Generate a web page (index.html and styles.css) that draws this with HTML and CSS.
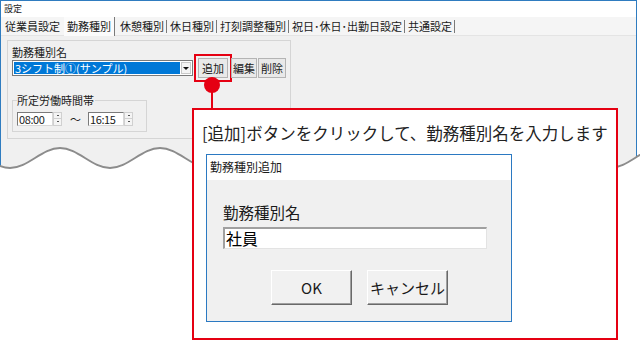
FILE: index.html
```html
<!DOCTYPE html>
<html lang="ja">
<head>
  <meta charset="UTF-8">
  <title>設定</title>
  <link rel="stylesheet" href="styles.css">
</head>
<body>
  <div class="window">
    <div class="titlebar">設定</div>
    <div class="tabs">
      <span class="tab first">従業員設定</span>
      <span class="tab active">勤務種別</span>
      <span class="tab">休憩種別</span>
      <span class="tab">休日種別</span>
      <span class="tab">打刻調整種別</span>
      <span class="tab">祝日･休日･出勤日設定</span>
      <span class="tab">共通設定</span>
    </div>
    <div class="page">
      <div class="group">
        <div class="field-label">勤務種別名</div>
        <div class="name-row">
          <div class="combo">
            <div class="combo-value">3シフト制①(サンプル)</div>
            <div class="combo-arrow"><i></i></div>
          </div>
          <button class="btn btn-add">追加</button>
          <button class="btn btn-edit">編集</button>
          <button class="btn btn-del">削除</button>
        </div>
        <fieldset class="hours">
          <legend>所定労働時間帯</legend>
          <div class="time-row">
            <div class="time-input">08:00</div>
            <div class="spin"><span><i class="up"></i></span><span><i class="down"></i></span></div>
            <span class="tilde">～</span>
            <div class="time-input">16:15</div>
            <div class="spin"><span><i class="up"></i></span><span><i class="down"></i></span></div>
          </div>
        </fieldset>
      </div>
    </div>
  </div>

  <!-- torn edge of the window -->
  <svg class="wave" width="640" height="190" viewBox="0 0 640 190">
    <path d="M-40 148 C-22 148 -8 168 10 168 S42 148 60 148 S92 168 110 168 S142 148 160 148 S192 168 210 168 S242 148 260 148 S292 168 310 168 S342 148 360 148 S392 168 410 168 S442 148 460 148 S492 168 510 168 S542 148 560 148 S592 168 610 168 S642 148 660 148 L660 190 L-40 190 Z" fill="#fff"/>
    <path d="M-40 148 C-22 148 -8 168 10 168 S42 148 60 148 S92 168 110 168 S142 148 160 148 S192 168 210 168 S242 148 260 148 S292 168 310 168 S342 148 360 148 S392 168 410 168 S442 148 460 148 S492 168 510 168 S542 148 560 148 S592 168 610 168 S642 148 660 148" fill="none" stroke="#8c8c8c" stroke-width="2"/>
  </svg>

  <div class="pin-line"></div>
  <div class="pin-dot"></div>

  <div class="callout">
    <div class="callout-text">[追加]ボタンをクリックして、勤務種別名を入力します</div>
    <div class="dialog">
      <div class="dialog-title">勤務種別追加</div>
      <div class="dialog-body">
        <div class="dialog-label">勤務種別名</div>
        <div class="dialog-input">社員</div>
        <div class="dialog-buttons">
          <button class="dlg-btn">OK</button>
          <button class="dlg-btn">キャンセル</button>
        </div>
      </div>
    </div>
  </div>
</body>
</html>
```

FILE: styles.css
```css
* {
  box-sizing: border-box;
}
body {
  margin: 0;
  width: 640px;
  height: 345px;
  position: relative;
  overflow: hidden;
  background: #fff;
  font-family: "Noto Sans CJK JP", sans-serif;
  color: #1a1a1a;
}
button {
  font-family: inherit;
  color: inherit;
  padding: 0;
  cursor: pointer;
}

/* window */
.window {
  width: 637px;
  height: 181px;
  border: 1px solid #2f7cc0;
  border-bottom: none;
  background: #f0f0f0;
}
.titlebar {
  height: 16px;
  background: #fff;
  font-size: 9px;
  line-height: 16px;
  padding-left: 3px;
}
.tabs {
  display: flex;
  align-items: center;
  height: 19px;
  padding-left: 4px;
  background: #f5f5f5;
  border-bottom: 1px solid #e4e4e4;
  font-size: 11px;
  line-height: 13px;
  white-space: nowrap;
}
.tab {
  padding: 0 2px 0 3px;
  border-right: 1px solid #7a7a7a;
}
.tab.first {
  padding: 0;
  border-right: none;
}
.tab.active {
  margin-left: 4px;
  padding: 3px 3px 3px 3px;
  line-height: 13px;
  background: #fbfbfb;
  border-right: none;
  box-shadow: 1px 0 0 #7a7a7a;
  margin-right: 3px;
}
.page {
  padding: 4px 0 0 6px;
}
.group {
  width: 284px;
  height: 99px;
  border: 1px solid #d5d5d5;
  padding: 5px 0 0 4px;
}
.field-label {
  font-size: 11px;
  line-height: 12px;
}
.name-row {
  display: flex;
  align-items: center;
  height: 20px;
}
.combo {
  display: flex;
  width: 181px;
  height: 16px;
  padding: 1px;
  border: 1px solid #7a7a7a;
  background: #fff;
}
.combo-value {
  flex: 1;
  background: #0078d7;
  color: #fff;
  font-size: 11px;
  line-height: 12px;
  padding-left: 1px;
}
.combo-arrow {
  width: 10px;
  margin-left: 1px;
  display: flex;
  align-items: center;
  justify-content: center;
  border: 1px solid #c8c8c8;
  background: #f4f4f4;
}
.combo-arrow i {
  border-left: 3px solid transparent;
  border-right: 3px solid transparent;
  border-top: 3px solid #111;
}
.btn {
  height: 20px;
  background: #e9e9e9;
  border: 1px solid #b4b4b4;
  font-size: 11px;
  line-height: 16px;
}
.btn-add {
  width: 30px;
  margin-left: 5px;
  outline: 2px solid #e50012;
  outline-offset: 2px;
}
.btn-edit {
  width: 26px;
  margin-left: 3px;
}
.btn-del {
  width: 28px;
  margin-left: 1px;
}
.hours {
  width: 135px;
  margin: 16px 0 0 0;
  padding: 6px 0 6px 4px;
  border: 1px solid #d5d5d5;
  min-inline-size: 0;
}
.hours legend {
  padding: 0 1px 0 0;
  font-size: 11px;
  line-height: 12px;
}
.time-row {
  display: flex;
  align-items: center;
  height: 13px;
}
.time-input {
  width: 36px;
  height: 14px;
  padding-left: 1px;
  border-style: solid;
  border-width: 1px;
  border-color: #7a7a7a #d8d8d8 #d8d8d8 #7a7a7a;
  background: #fff;
  font-size: 11px;
  line-height: 12px;
  letter-spacing: -0.4px;
}
.spin {
  width: 9px;
  height: 14px;
  display: flex;
  flex-direction: column;
  border: 1px solid #d0d0d0;
  background: #f4f4f4;
}
.spin span {
  flex: 1;
  display: flex;
  align-items: center;
  justify-content: center;
}
.spin span + span {
  border-top: 1px solid #d0d0d0;
}
.spin i {
  width: 2px;
  height: 1px;
  background: #555;
}
.tilde {
  margin: 0 7px 0 8px;
  font-size: 11px;
  line-height: 12px;
}

/* torn edge */
.wave {
  position: absolute;
  top: 0;
  left: 0;
}

/* pointer */
.pin-line {
  position: absolute;
  left: 211px;
  top: 85px;
  width: 2px;
  height: 24px;
  background: #e50012;
}
.pin-dot {
  position: absolute;
  left: 204px;
  top: 77px;
  width: 16px;
  height: 16px;
  border-radius: 50%;
  background: #e50012;
}

/* callout */
.callout {
  position: absolute;
  left: 192px;
  top: 108px;
  width: 426px;
  height: 232px;
  padding: 13px 0 0 8px;
  border: 2px solid #e50012;
  background: #fff;
}
.callout-text {
  font-size: 16.5px;
  line-height: 20px;
  color: #222;
  white-space: nowrap;
}
.dialog {
  width: 306px;
  height: 168px;
  margin: 11px 0 0 4px;
  border: 1px solid #2b79c2;
  background: #f0f0f0;
}
.dialog-title {
  height: 25px;
  padding-left: 3px;
  background: #fff;
  font-size: 12px;
  line-height: 23px;
}
.dialog-body {
  padding: 23px 0 0 16px;
}
.dialog-label {
  font-size: 15.5px;
  line-height: 18px;
}
.dialog-input {
  width: 264px;
  height: 22px;
  margin-top: 6px;
  padding-left: 1px;
  border-style: solid;
  border-width: 2px 1px 1px 2px;
  border-color: #a0a0a0 #e3e3e3 #e3e3e3 #a0a0a0;
  background: #fff;
  font-size: 16px;
  line-height: 18px;
  color: #000;
}
.dialog-buttons {
  display: flex;
  gap: 15px;
  margin-top: 21px;
  padding-left: 48px;
}
.dlg-btn {
  width: 81px;
  height: 35px;
  background: #f1f1f1;
  border-style: solid;
  border-width: 1px;
  border-color: #fff #696969 #696969 #fff;
  box-shadow: inset -1px -1px 0 #a0a0a0;
  font-size: 15px;
  line-height: 20px;
}
```
